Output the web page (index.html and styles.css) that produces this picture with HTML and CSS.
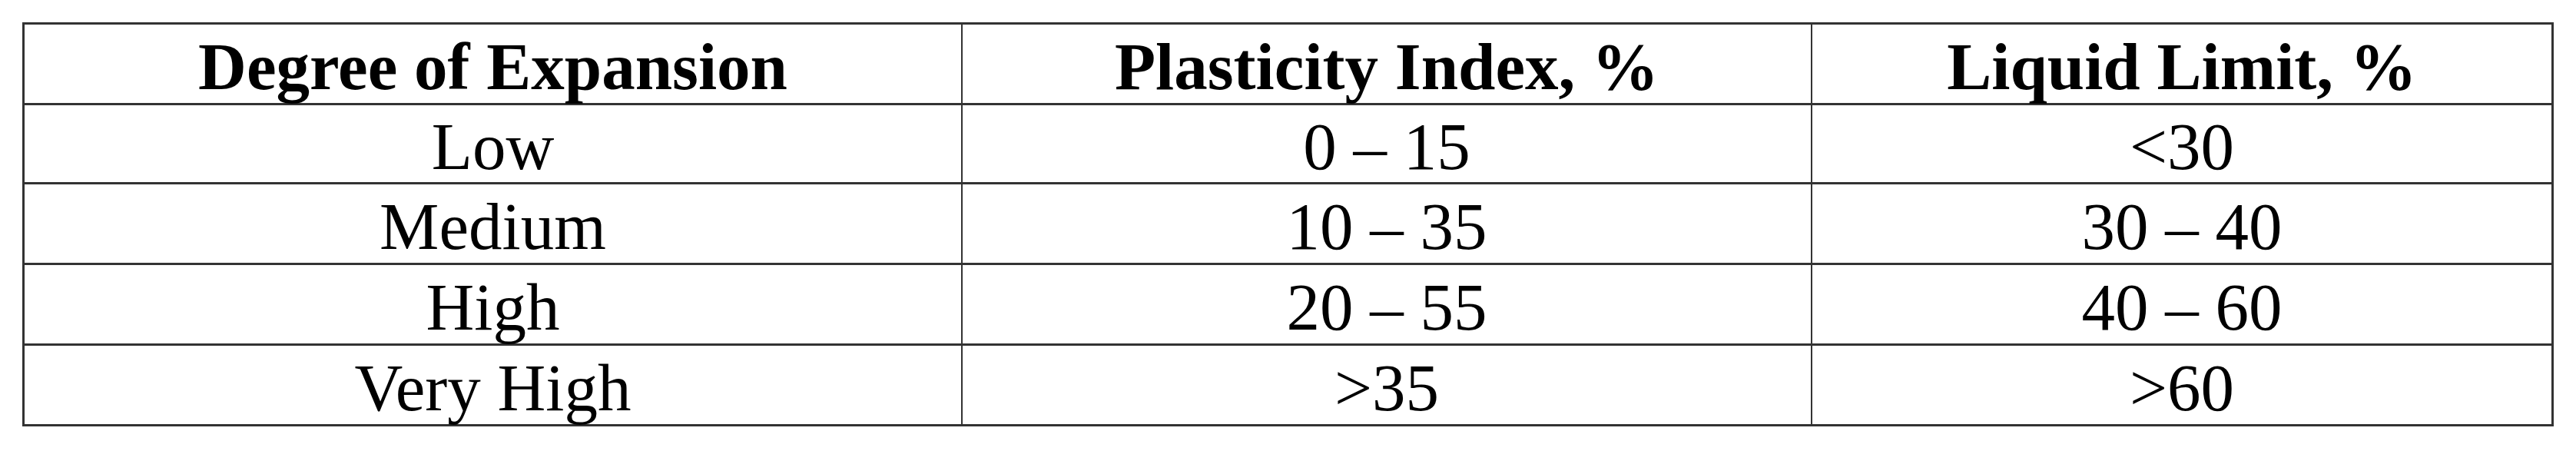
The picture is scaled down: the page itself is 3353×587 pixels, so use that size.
FILE: index.html
```html
<!DOCTYPE html>
<html lang="en">
<head>
<meta charset="utf-8">
<title>Degree of Expansion</title>
<link rel="stylesheet" href="styles.css">
</head>
<body>
<div class="page">
  <table class="grid">
    <colgroup>
      <col class="c1">
      <col class="c2">
      <col class="c3">
    </colgroup>
    <thead>
      <tr class="row-head">
        <th>Degree of Expansion</th>
        <th>Plasticity Index, %</th>
        <th>Liquid Limit, %</th>
      </tr>
    </thead>
    <tbody>
      <tr class="row-first">
        <td>Low</td>
        <td>0 – 15</td>
        <td>&lt;30</td>
      </tr>
      <tr>
        <td>Medium</td>
        <td>10 – 35</td>
        <td>30 – 40</td>
      </tr>
      <tr>
        <td>High</td>
        <td>20 – 55</td>
        <td>40 – 60</td>
      </tr>
      <tr class="row-last">
        <td>Very High</td>
        <td>&gt;35</td>
        <td>&gt;60</td>
      </tr>
    </tbody>
  </table>
</div>
</body>
</html>
```

FILE: styles.css
```css
html, body {
  margin: 0;
  padding: 0;
  background: #ffffff;
}

.page {
  padding: 29px 0 0 29px;
}

.grid {
  border-collapse: separate;
  border-spacing: 0;
  table-layout: fixed;
  width: 3295px;
  border: 3px solid #333333;
  font-family: "Liberation Serif", "Times New Roman", serif;
  font-size: 87px;
  color: #000000;
}

.c1 { width: 1221px; }
.c2 { width: 1106px; }
.c3 { width: 962px; }

.grid th,
.grid td {
  box-sizing: border-box;
  height: 105px;
  padding: 6px 0 0 0;
  line-height: 1;
  text-align: center;
  vertical-align: middle;
  white-space: nowrap;
  border-right: 2px solid #333333;
  border-bottom: 3px solid #333333;
}

.grid th {
  font-weight: bold;
}

.grid th:last-child,
.grid td:last-child {
  border-right: none;
}

.row-first td {
  height: 103px;
}

.row-last td {
  height: 102px;
  border-bottom: none;
}
```
